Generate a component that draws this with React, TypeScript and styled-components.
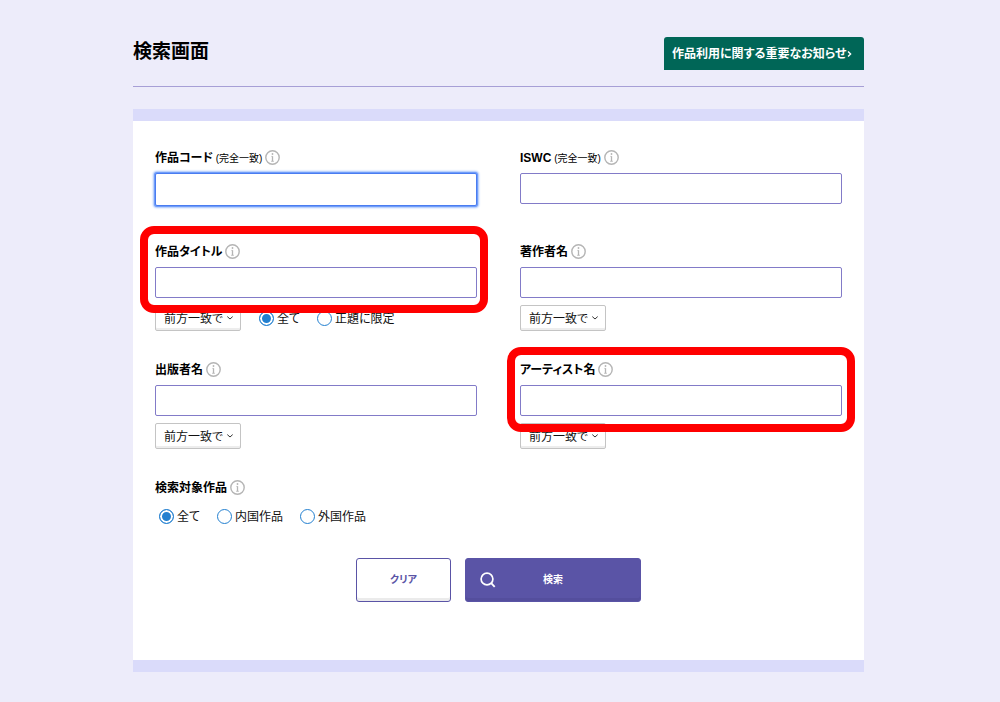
import React from "react";
import styled, { createGlobalStyle, css } from "styled-components";

const color = {
  page: "#edecfa",
  band: "#dadbfa",
  accent: "#5a54a6",
  field: "#827bc8",
  rule: "#a79fd6",
  green: "#006657",
  radio: "#2380d0",
  mark: "#ff0000",
};

const GlobalStyle = createGlobalStyle`
  *, *::before, *::after { box-sizing: border-box; }
  body {
    margin: 0;
    background: ${color.page};
    color: #000;
    font-family: "Liberation Sans", "Noto Sans CJK JP", sans-serif;
    font-size: 12px;
    line-height: 20px;
    font-feature-settings: "palt";
  }
  button, input, select { font: inherit; font-feature-settings: inherit; }
`;

const Page = styled.main`
  padding: 37px 136px 30px 133px;
`;

const Header = styled.header`
  display: flex;
  align-items: flex-start;
  justify-content: space-between;
  padding-bottom: 16px;
  border-bottom: 1px solid ${color.rule};
`;

const Title = styled.h1`
  margin: 0;
  font-size: 19px;
  line-height: 30px;
  font-weight: 700;
`;

const NoticeLink = styled.a`
  display: flex;
  align-items: center;
  justify-content: space-between;
  width: 200px;
  height: 33px;
  padding: 0 11px 0 8px;
  border-radius: 3px 3px 0 0;
  background: ${color.green};
  color: #fff;
  font-weight: 700;
  text-decoration: none;
  white-space: nowrap;
`;

const Panel = styled.form`
  margin-top: 22px;
  padding: 26px 22px 58px;
  border: solid ${color.band};
  border-width: 12px 0;
  background: #fff;
`;

const Fields = styled.div`
  display: grid;
  grid-template-columns: 1fr 1fr;
  gap: 28px 43px;
`;

const Field = styled.div`
  position: relative;
  display: flex;
  flex-direction: column;
  gap: 6px;
  min-height: 66px;
`;

const Group = styled.fieldset`
  grid-column: 1 / -1;
  display: flex;
  flex-direction: column;
  gap: 9px;
  margin: 0;
  padding: 0;
  border: 0;
`;

const Caption = styled.div`
  display: flex;
  align-items: center;
  gap: 3px;
  height: 20px;
  font-weight: 700;
  > :first-child {
    padding-top: 2px;
  }
`;

const Note = styled.small`
  font-size: 10px;
  font-weight: 400;
`;

const TextInput = styled.input<{ $active?: boolean }>`
  width: 100%;
  height: 31px;
  padding: 0 8px;
  border: 1px solid ${color.field};
  border-radius: 2px;
  background: #fff;
  outline: none;
  ${(p) =>
    p.$active &&
    css`
      height: 33px;
      border-color: #4a7cf0;
      box-shadow: 0 0 0 1px #6f9dfa, 0 0 2px 2px #a4c2fb;
    `}
`;

const Options = styled.div`
  display: flex;
  align-items: center;
  gap: 18px;
  margin-top: 1px;
`;

const SelectBox = styled.div`
  position: relative;
  width: 86px;
  height: 26px;
  svg {
    position: absolute;
    right: 7px;
    top: 9px;
    pointer-events: none;
  }
`;

const Select = styled.select`
  appearance: none;
  width: 100%;
  height: 100%;
  padding: 2px 16px 0 8px;
  border: 1px solid #c4c4c4;
  border-radius: 2px;
  background: #fff;
  box-shadow: inset 0 -2px 0 #ededed;
  color: #111;
`;

const RadioRow = styled.div<{ $indent?: boolean }>`
  display: flex;
  gap: 17px;
  padding-left: ${(p) => (p.$indent ? 4 : 0)}px;
`;

const RadioLabel = styled.label`
  display: flex;
  align-items: center;
  gap: 3px;
  color: #111;
  white-space: nowrap;
  span {
    padding-top: 1px;
  }
`;

const Radio = styled.input`
  appearance: none;
  width: 15px;
  height: 15px;
  margin: 0;
  border: 1px solid ${color.radio};
  border-radius: 50%;
  background: #fff;
  &:checked {
    background: ${color.radio};
    box-shadow: inset 0 0 0 2px #fff;
  }
`;

const Highlight = styled.div<{ $left: number; $top: number; $height: number }>`
  position: absolute;
  left: ${(p) => p.$left}px;
  top: ${(p) => p.$top}px;
  width: calc(100% + 26px);
  height: ${(p) => p.$height}px;
  border: 8px solid ${color.mark};
  border-radius: 14px;
  pointer-events: none;
`;

const Actions = styled.div`
  display: flex;
  justify-content: center;
  gap: 14px;
  margin-top: 31px;
`;

const Button = styled.button`
  height: 44px;
  padding: 0;
  border: 1px solid ${color.accent};
  border-radius: 3px;
  font-size: 10px;
  font-weight: 700;
`;

const ClearButton = styled(Button)`
  width: 95px;
  background: #fff;
  color: ${color.accent};
  box-shadow: inset 0 -3px 0 #ebebeb;
`;

const SearchButton = styled(Button)`
  position: relative;
  width: 176px;
  background: ${color.accent};
  color: #fff;
  box-shadow: inset 0 -3px 0 #544e9d;
  svg {
    position: absolute;
    left: 14px;
    top: 13px;
  }
`;

const InfoIcon = () => (
  <svg width="15" height="15" viewBox="0 0 15 15" fill="none" stroke="#b5b5b5" aria-hidden="true">
    <circle cx="7.5" cy="7.5" r="6.7" strokeWidth="1.4" />
    <path d="M7.5 6.2v5.2" strokeWidth="1.3" />
    <path d="M6.3 6.4h1.2M6 11.3h3" strokeWidth="0.7" />
    <circle cx="7.5" cy="4" r="0.9" fill="#b5b5b5" stroke="none" />
  </svg>
);

const DownIcon = () => (
  <svg width="8" height="8" viewBox="0 0 8 8" fill="none" stroke="#333" aria-hidden="true">
    <path d="M1.3 2.6 4 5l2.7-2.4" strokeWidth="1" />
  </svg>
);

const NextIcon = () => (
  <svg width="8" height="10" viewBox="0 0 8 10" fill="none" stroke="#fff" aria-hidden="true">
    <path d="M2.5 2 5.5 5l-3 3" strokeWidth="1.7" />
  </svg>
);

const SearchIcon = () => (
  <svg width="16" height="16" viewBox="0 0 16 16" fill="none" stroke="#fff" aria-hidden="true">
    <circle cx="7" cy="7" r="5.9" strokeWidth="1.7" />
    <path d="m11.2 11.2 3.5 3.6" strokeWidth="1.9" />
  </svg>
);

type FieldLabelProps = { htmlFor: string; text: string; note?: string };

const FieldLabel = ({ htmlFor, text, note }: FieldLabelProps) => (
  <Caption>
    <label htmlFor={htmlFor}>
      {text}
      {note && <Note> {note}</Note>}
    </label>
    <InfoIcon />
  </Caption>
);

const MatchSelect = ({ label }: { label: string }) => (
  <SelectBox>
    <Select aria-label={label}>
      <option>前方一致で</option>
    </Select>
    <DownIcon />
  </SelectBox>
);

type RadiosProps = { name: string; items: string[]; indent?: boolean };

const Radios = ({ name, items, indent }: RadiosProps) => (
  <RadioRow $indent={indent}>
    {items.map((item, i) => (
      <RadioLabel key={item}>
        <Radio type="radio" name={name} defaultChecked={i === 0} />
        <span>{item}</span>
      </RadioLabel>
    ))}
  </RadioRow>
);

export default function App() {
  return (
    <>
      <GlobalStyle />
      <Page>
        <Header>
          <Title>検索画面</Title>
          <NoticeLink href="#notice">
            作品利用に関する重要なお知らせ
            <NextIcon />
          </NoticeLink>
        </Header>

        <Panel onSubmit={(e: React.FormEvent) => e.preventDefault()}>
          <Fields>
            <Field>
              <FieldLabel htmlFor="code" text="作品コード" note="(完全一致)" />
              <TextInput id="code" $active />
            </Field>
            <Field>
              <FieldLabel htmlFor="iswc" text="ISWC" note="(完全一致)" />
              <TextInput id="iswc" />
            </Field>

            <Field>
              <FieldLabel htmlFor="title" text="作品タイトル" />
              <TextInput id="title" />
              <Options>
                <MatchSelect label="作品タイトル" />
                <Radios name="titleScope" items={["全て", "正題に限定"]} />
              </Options>
              <Highlight $left={-15} $top={-15} $height={87} />
            </Field>
            <Field>
              <FieldLabel htmlFor="author" text="著作者名" />
              <TextInput id="author" />
              <Options>
                <MatchSelect label="著作者名" />
              </Options>
            </Field>

            <Field>
              <FieldLabel htmlFor="publisher" text="出版者名" />
              <TextInput id="publisher" />
              <Options>
                <MatchSelect label="出版者名" />
              </Options>
            </Field>
            <Field>
              <FieldLabel htmlFor="artist" text="アーティスト名" />
              <TextInput id="artist" />
              <Options>
                <MatchSelect label="アーティスト名" />
              </Options>
              <Highlight $left={-13} $top={-12} $height={85} />
            </Field>

            <Group aria-labelledby="target">
              <Caption>
                <span id="target">検索対象作品</span>
                <InfoIcon />
              </Caption>
              <Radios name="target" items={["全て", "内国作品", "外国作品"]} indent />
            </Group>
          </Fields>

          <Actions>
            <ClearButton type="reset">クリア</ClearButton>
            <SearchButton type="submit">
              <SearchIcon />
              検索
            </SearchButton>
          </Actions>
        </Panel>
      </Page>
    </>
  );
}
